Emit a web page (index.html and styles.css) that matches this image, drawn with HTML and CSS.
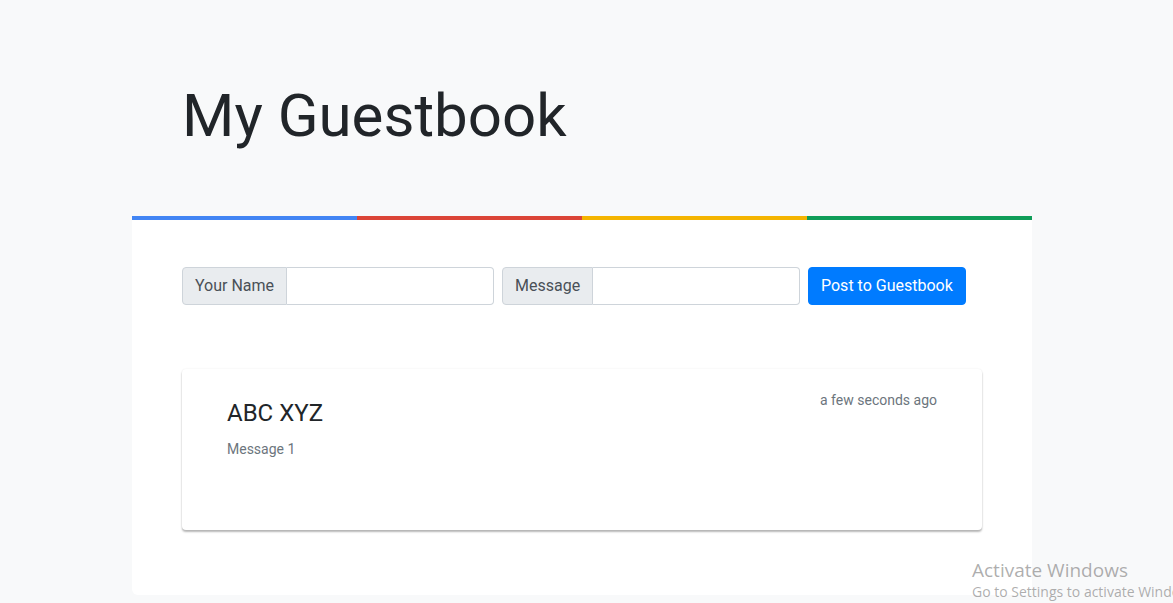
FILE: index.html
```html
<!DOCTYPE html>
<html lang="en">
<head>
<meta charset="utf-8">
<title>My Guestbook</title>
<link rel="stylesheet" href="styles.css">
</head>
<body>
<div class="page">
  <h1 class="title">My Guestbook</h1>
  <main class="panel">
    <div class="stripes"><span class="s-blue"></span><span class="s-red"></span><span class="s-yellow"></span><span class="s-green"></span></div>
    <div class="panel-body">
      <form class="entry-form">
        <div class="input-group name-group">
          <span class="addon">Your Name</span>
          <input class="field" type="text">
        </div>
        <div class="input-group msg-group">
          <span class="addon">Message</span>
          <input class="field" type="text">
        </div>
        <button class="btn-post" type="button">Post to Guestbook</button>
      </form>
      <div class="entry">
        <div class="entry-head">
          <h2 class="entry-name">ABC XYZ</h2>
          <span class="entry-time">a few seconds ago</span>
        </div>
        <p class="entry-msg">Message 1</p>
      </div>
    </div>
  </main>
</div>
<div class="activate">
  <div class="act-title">Activate Windows</div>
  <div class="act-sub">Go to Settings to activate Windows.</div>
</div>
</body>
</html>
```
FILE: styles.css
```css
html, body {
  margin: 0;
  padding: 0;
}
body {
  background: #f8f9fa;
  font-family: Roboto, "Liberation Sans", sans-serif;
  color: #212529;
  height: 603px;
  overflow: hidden;
}
.page {
  width: 900px;
  margin-left: 132px;
  padding-top: 78px;
}
.title {
  margin: 0 0 62px 50px;
  font-size: 60px;
  font-weight: 400;
  line-height: 76px;
  height: 76px;
  color: #212529;
}
.panel {
  background: #fff;
  border-radius: 0 0 6px 6px;
}
.stripes {
  display: flex;
  height: 4px;
}
.stripes span { flex: 1; }
.s-blue { background: #4285f4; }
.s-red { background: #db4437; }
.s-yellow { background: #f4b400; }
.s-green { background: #0f9d58; }
.panel-body {
  padding: 47px 50px 65px 50px;
}
.entry-form {
  display: flex;
  gap: 8px;
  height: 38px;
}
.input-group {
  display: flex;
  height: 38px;
}
.name-group { width: 312px; }
.msg-group { width: 298px; }
.addon {
  display: flex;
  align-items: center;
  padding: 0 12px 1px;
  background: #e9ecef;
  border: 1px solid #ced4da;
  border-radius: 4px 0 0 4px;
  font-size: 16px;
  color: #495057;
  box-sizing: border-box;
}
.field {
  flex: 1;
  min-width: 0;
  border: 1px solid #ced4da;
  border-left: none;
  border-radius: 0 4px 4px 0;
  background: #fff;
  box-sizing: border-box;
  height: 38px;
  padding: 0 12px;
  font-size: 16px;
}
.btn-post {
  height: 38px;
  padding: 0 12px 1px;
  background: #007bff;
  color: #fff;
  border: 1px solid #007bff;
  border-radius: 4px;
  font-family: Roboto, "Liberation Sans", sans-serif;
  font-size: 16px;
}
.entry {
  margin-top: 64px;
  height: 161px;
  box-sizing: border-box;
  padding: 21px 45px 0 45px;
  background: #fff;
  border-radius: 4px;
  box-shadow: 0 2px 2px rgba(0,0,0,0.28), 0 0 2px rgba(0,0,0,0.08);
}
.entry-head {
  display: flex;
  justify-content: space-between;
  align-items: flex-start;
}
.entry-name {
  margin: 9px 0 0 0;
  font-size: 24px;
  font-weight: 400;
  line-height: 1.2;
  color: #212529;
}
.entry-time {
  font-size: 14px;
  line-height: 21px;
  color: #6c757d;
}
.entry-msg {
  margin: 11px 0 0 0;
  font-size: 14px;
  line-height: 21px;
  color: #6c757d;
}
.activate {
  position: absolute;
  left: 972px;
  top: 558px;
  font-family: "Open Sans", "Noto Sans", sans-serif;
  color: rgba(120,120,120,0.6);
  white-space: nowrap;
}
.act-title {
  font-size: 19px;
  line-height: 24px;
}
.act-sub {
  font-size: 14px;
  line-height: 20px;
}
```
